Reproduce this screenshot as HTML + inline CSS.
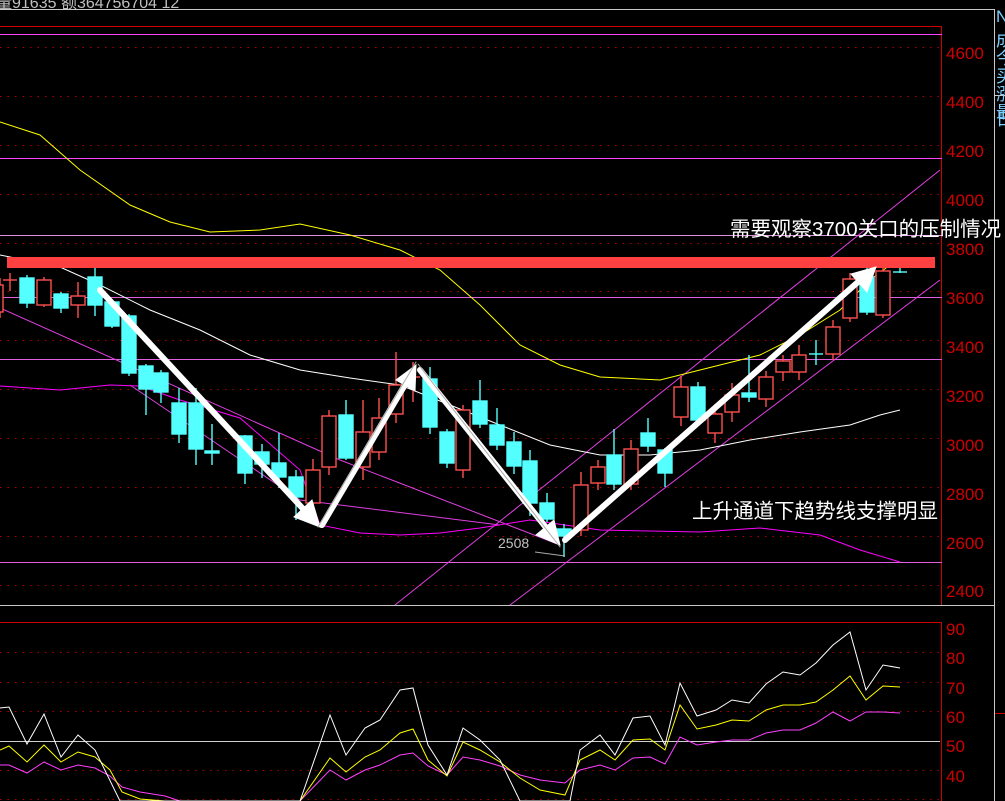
<!DOCTYPE html>
<html><head><meta charset="utf-8"><style>
html,body{margin:0;padding:0;background:#000;width:1005px;height:801px;overflow:hidden}
svg{display:block}
text{font-family:"Liberation Sans","Noto Sans CJK SC",sans-serif}
</style></head><body>
<svg width="1005" height="801" viewBox="0 0 1005 801" xmlns="http://www.w3.org/2000/svg">
<rect width="1005" height="801" fill="#000"/>
<text x="-4" y="8" fill="#c0c0c0" font-size="16">量91635 额364756704 12</text>
<line x1="0" y1="9.5" x2="995" y2="9.5" stroke="#c8c8c8"/>
<line x1="0" y1="26.5" x2="942" y2="26.5" stroke="#d00000"/>
<line x1="941.5" y1="26" x2="941.5" y2="605" stroke="#d00000"/>
<line x1="0" y1="605.5" x2="995" y2="605.5" stroke="#c8c8c8"/>
<line x1="0" y1="622.5" x2="942" y2="622.5" stroke="#d00000"/>
<line x1="941.5" y1="622" x2="941.5" y2="801" stroke="#d00000"/>
<line x1="994.5" y1="9" x2="994.5" y2="801" stroke="#c8c8c8"/>
<line x1="995" y1="95.5" x2="1005" y2="95.5" stroke="#c8c8c8"/>
<line x1="995" y1="713.5" x2="1005" y2="713.5" stroke="#d00000"/>
<g fill="#7fd0ff" font-size="17"><text x="996" y="22">N</text><text x="996" y="46">成</text><text x="996" y="64">今</text><text x="996" y="82">买</text><text x="996" y="100">涨</text><text x="996" y="118">最</text><text x="996" y="125">日</text></g>
<g stroke="#b00000" stroke-dasharray="1.5,6">
<line x1="0" y1="47.5" x2="940" y2="47.5"/><line x1="0" y1="96.5" x2="940" y2="96.5"/><line x1="0" y1="145.5" x2="940" y2="145.5"/><line x1="0" y1="194.5" x2="940" y2="194.5"/><line x1="0" y1="243.5" x2="940" y2="243.5"/><line x1="0" y1="291.5" x2="940" y2="291.5"/><line x1="0" y1="340.5" x2="940" y2="340.5"/><line x1="0" y1="389.5" x2="940" y2="389.5"/><line x1="0" y1="438.5" x2="940" y2="438.5"/><line x1="0" y1="487.5" x2="940" y2="487.5"/><line x1="0" y1="536.5" x2="940" y2="536.5"/><line x1="0" y1="585.5" x2="940" y2="585.5"/>
<line x1="0" y1="652.5" x2="940" y2="652.5"/><line x1="0" y1="682.5" x2="940" y2="682.5"/><line x1="0" y1="711.5" x2="940" y2="711.5"/><line x1="0" y1="770.5" x2="940" y2="770.5"/><line x1="0" y1="799.5" x2="940" y2="799.5"/>
</g>
<line x1="0" y1="741.5" x2="940" y2="741.5" stroke="#d0d0d0"/>
<g fill="#d00000" font-size="17">
<text x="946" y="59">4600</text><text x="946" y="108">4400</text><text x="946" y="157">4200</text><text x="946" y="206">4000</text><text x="946" y="255">3800</text><text x="946" y="304">3600</text><text x="946" y="353">3400</text><text x="946" y="402">3200</text><text x="946" y="451">3000</text><text x="946" y="500">2800</text><text x="946" y="549">2600</text><text x="946" y="597">2400</text>
<text x="946" y="635">90</text><text x="946" y="664">80</text><text x="946" y="694">70</text><text x="946" y="723">60</text><text x="946" y="752">50</text><text x="946" y="782">40</text>
</g>
<g stroke="#ff40ff" stroke-width="1">
<line x1="0" y1="34.5" x2="942" y2="34.5"/><line x1="0" y1="158.5" x2="942" y2="158.5"/><line x1="0" y1="235.5" x2="942" y2="235.5" stroke="#e090e0"/><line x1="0" y1="297.5" x2="942" y2="297.5" stroke="#e060e0"/><line x1="0" y1="359.5" x2="942" y2="359.5" stroke="#e060e0"/><line x1="0" y1="562.5" x2="942" y2="562.5" stroke="#e060e0"/>
</g>
<g stroke="#e040e0" fill="none" stroke-width="1">
<line x1="395" y1="605" x2="940" y2="170"/>
<line x1="510" y1="605" x2="940" y2="280"/>
<polyline points="0,308 340,460 560,545"/>
<polyline points="130,385 300,500 500,525"/>
<polyline points="0,386 60,390 110,385 140,386 180,400 240,418 300,470 320,525 360,533 400,535 440,533 480,528 530,520 600,530 650,531 700,532 760,528 820,535 860,550 900,562" stroke="#ff00ff"/>
</g>
<polyline fill="none" stroke="#ffff00" points="0,122 40,135 80,170 130,205 170,222 210,232 260,230 300,224 350,235 400,250 440,270 480,305 520,345 560,365 600,377 660,380 700,370 760,355 800,335 840,310 870,280 890,265"/>
<polyline fill="none" stroke="#ffffff" points="0,255 60,267 100,285 150,310 200,330 250,355 300,370 350,378 400,385 450,405 500,425 550,445 600,455 650,455 700,450 750,440 800,432 850,425 880,415 900,410"/>
<g stroke-width="1.4">
<g stroke="#ff5050" fill="#000">
<line x1="0" y1="278" x2="0" y2="318"/><rect x="-7" y="285" width="10" height="27"/>
<line x1="10" y1="273" x2="10" y2="291"/><line x1="3" y1="280" x2="17" y2="280"/>
<line x1="44" y1="277" x2="44" y2="307"/><rect x="37" y="280" width="14" height="25"/>
<line x1="78" y1="282" x2="78" y2="318"/><rect x="71" y="296" width="14" height="9"/>
<line x1="313" y1="459" x2="313" y2="510"/><rect x="306" y="470" width="14" height="33"/>
<line x1="329" y1="410" x2="329" y2="475"/><rect x="322" y="416" width="14" height="51"/>
<line x1="363" y1="400" x2="363" y2="480"/><rect x="356" y="432" width="14" height="35"/>
<line x1="379" y1="398" x2="379" y2="460"/><rect x="372" y="418" width="14" height="34"/>
<line x1="396" y1="352" x2="396" y2="423"/><rect x="389" y="385" width="14" height="29"/>
<line x1="413" y1="362" x2="413" y2="402"/><line x1="406" y1="377" x2="420" y2="377"/>
<line x1="463" y1="405" x2="463" y2="478"/><rect x="456" y="410" width="14" height="60"/>
<line x1="581" y1="472" x2="581" y2="536"/><rect x="574" y="485" width="14" height="45"/>
<line x1="598" y1="460" x2="598" y2="490"/><rect x="591" y="467" width="14" height="16"/>
<line x1="631" y1="440" x2="631" y2="490"/><rect x="624" y="449" width="14" height="35"/>
<line x1="681" y1="376" x2="681" y2="426"/><rect x="674" y="387" width="14" height="30"/>
<line x1="715" y1="404" x2="715" y2="443"/><rect x="708" y="414" width="14" height="19"/>
<line x1="732" y1="383" x2="732" y2="422"/><rect x="725" y="395" width="14" height="17"/>
<line x1="766" y1="371" x2="766" y2="407"/><rect x="759" y="377" width="14" height="22"/>
<line x1="783" y1="355" x2="783" y2="381"/><rect x="776" y="361" width="14" height="11"/>
<line x1="799" y1="345" x2="799" y2="380"/><rect x="792" y="355" width="14" height="17"/>
<line x1="833" y1="320" x2="833" y2="360"/><rect x="826" y="327" width="14" height="27"/>
<line x1="850" y1="273" x2="850" y2="322"/><rect x="843" y="279" width="14" height="39"/>
<line x1="883" y1="266" x2="883" y2="318"/><rect x="876" y="271" width="14" height="44"/>
</g>
<g stroke="#54ffff" fill="#54ffff">
<line x1="27" y1="275" x2="27" y2="308"/><rect x="20" y="278" width="14" height="25"/>
<line x1="61" y1="292" x2="61" y2="313"/><rect x="54" y="294" width="14" height="14"/>
<line x1="95" y1="268" x2="95" y2="316"/><rect x="88" y="277" width="14" height="28"/>
<line x1="112" y1="300" x2="112" y2="328"/><rect x="105" y="302" width="14" height="24"/>
<line x1="129" y1="314" x2="129" y2="376"/><rect x="122" y="316" width="14" height="57"/>
<line x1="146" y1="364" x2="146" y2="415"/><rect x="139" y="366" width="14" height="23"/>
<line x1="161" y1="370" x2="161" y2="403"/><rect x="154" y="373" width="14" height="19"/>
<line x1="179" y1="388" x2="179" y2="443"/><rect x="172" y="403" width="14" height="31"/>
<line x1="196" y1="388" x2="196" y2="465"/><rect x="189" y="403" width="14" height="46"/>
<line x1="212" y1="424" x2="212" y2="465"/><rect x="205" y="451" width="14" height="2"/>
<line x1="245" y1="435" x2="245" y2="484"/><rect x="238" y="436" width="14" height="37"/>
<line x1="262" y1="444" x2="262" y2="478"/><rect x="255" y="452" width="14" height="12"/>
<line x1="279" y1="433" x2="279" y2="488"/><rect x="272" y="463" width="14" height="14"/>
<line x1="296" y1="470" x2="296" y2="520"/><rect x="289" y="477" width="14" height="20"/>
<line x1="346" y1="400" x2="346" y2="460"/><rect x="339" y="415" width="14" height="43"/>
<line x1="430" y1="367" x2="430" y2="434"/><rect x="423" y="379" width="14" height="48"/>
<line x1="447" y1="429" x2="447" y2="468"/><rect x="440" y="432" width="14" height="31"/>
<line x1="480" y1="380" x2="480" y2="428"/><rect x="473" y="401" width="14" height="23"/>
<line x1="497" y1="408" x2="497" y2="450"/><rect x="490" y="425" width="14" height="20"/>
<line x1="514" y1="432" x2="514" y2="474"/><rect x="507" y="442" width="14" height="24"/>
<line x1="530" y1="450" x2="530" y2="516"/><rect x="523" y="461" width="14" height="42"/>
<line x1="547" y1="493" x2="547" y2="522"/><rect x="540" y="503" width="14" height="16"/>
<line x1="564" y1="524" x2="564" y2="557"/><rect x="557" y="529" width="14" height="7"/>
<line x1="614" y1="429" x2="614" y2="490"/><rect x="607" y="455" width="14" height="29"/>
<line x1="648" y1="418" x2="648" y2="452"/><rect x="641" y="433" width="14" height="13"/>
<line x1="665" y1="448" x2="665" y2="487"/><rect x="658" y="450" width="14" height="23"/>
<line x1="698" y1="382" x2="698" y2="420"/><rect x="691" y="387" width="14" height="33"/>
<line x1="749" y1="355" x2="749" y2="402"/><rect x="742" y="393" width="14" height="4"/>
<line x1="816" y1="340" x2="816" y2="365"/><line x1="809" y1="354" x2="823" y2="354"/>
<line x1="867" y1="265" x2="867" y2="315"/><rect x="860" y="277" width="14" height="35"/>
<line x1="900" y1="262" x2="900" y2="273"/><line x1="893" y1="272" x2="907" y2="272"/>
</g>
</g>
<rect x="7" y="257" width="928" height="11" fill="#ff4040"/>
<g stroke="#ffffff" fill="#ffffff" stroke-linecap="round">
<line x1="100" y1="290" x2="306" y2="512" stroke-width="6"/>
<polygon points="320,527 294,517 312,500" stroke-width="1"/>
<line x1="322" y1="525" x2="406" y2="383" stroke-width="6"/>
<polygon points="416,365 415,391 396,380" stroke-width="1"/>
<line x1="420" y1="370" x2="548" y2="530" stroke-width="6"/>
<polygon points="560,545 536,535 554,520" stroke-width="1"/>
<line x1="565" y1="540" x2="858" y2="282" stroke-width="6"/>
<polygon points="876,267 867,292 851,274" stroke-width="1"/>
<line x1="318" y1="527" x2="416" y2="362" stroke="#aaa" stroke-width="1"/>
<line x1="418" y1="364" x2="560" y2="547" stroke="#aaa" stroke-width="1"/>
</g>
<text x="498" y="548" fill="#c0c0c0" font-size="14">2508</text>
<line x1="535" y1="552" x2="565" y2="556" stroke="#aaa"/>
<text x="730" y="236" fill="#ffffff" font-size="20.5">需要观察3700关口的压制情况</text>
<text x="692" y="518" fill="#ffffff" font-size="20.5">上升通道下趋势线支撑明显</text>
<polyline fill="none" stroke="#ff40ff" points="0,765 9,765 27,773 44,762 61,770 78,765 95,768 110,776 122,787 140,792 165,796 180,801 250,801 300,801 330,770 346,780 365,770 380,765 400,755 413,753 428,766 447,775 463,757 480,760 500,766 520,775 540,780 565,783 580,770 600,765 615,770 633,758 650,757 665,764 680,737 697,745 716,742 732,740 749,740 766,733 783,730 800,730 816,723 833,712 850,721 866,712 883,712 900,713"/>
<polyline fill="none" stroke="#ffff00" points="0,750 9,746 27,762 44,745 61,762 78,752 95,757 110,770 122,792 140,799 165,801 300,801 330,758 346,772 365,757 380,750 400,733 413,729 428,760 447,776 463,742 480,750 500,762 520,778 540,790 565,795 580,760 600,750 615,760 633,740 650,739 665,750 680,705 697,729 716,725 732,720 749,721 766,710 783,705 800,705 816,702 833,690 850,676 866,700 883,686 900,687"/>
<polyline fill="none" stroke="#ffffff" points="0,708 9,707 27,744 44,714 61,757 78,735 95,750 120,801 300,801 330,715 346,755 365,728 380,720 400,690 413,688 428,745 447,775 463,728 480,740 500,760 520,801 570,801 580,750 600,735 615,755 633,718 650,716 665,745 680,683 697,716 716,710 732,700 749,703 766,684 783,672 800,675 816,663 833,645 850,632 866,690 883,665 900,668"/>
</svg>
</body></html>
